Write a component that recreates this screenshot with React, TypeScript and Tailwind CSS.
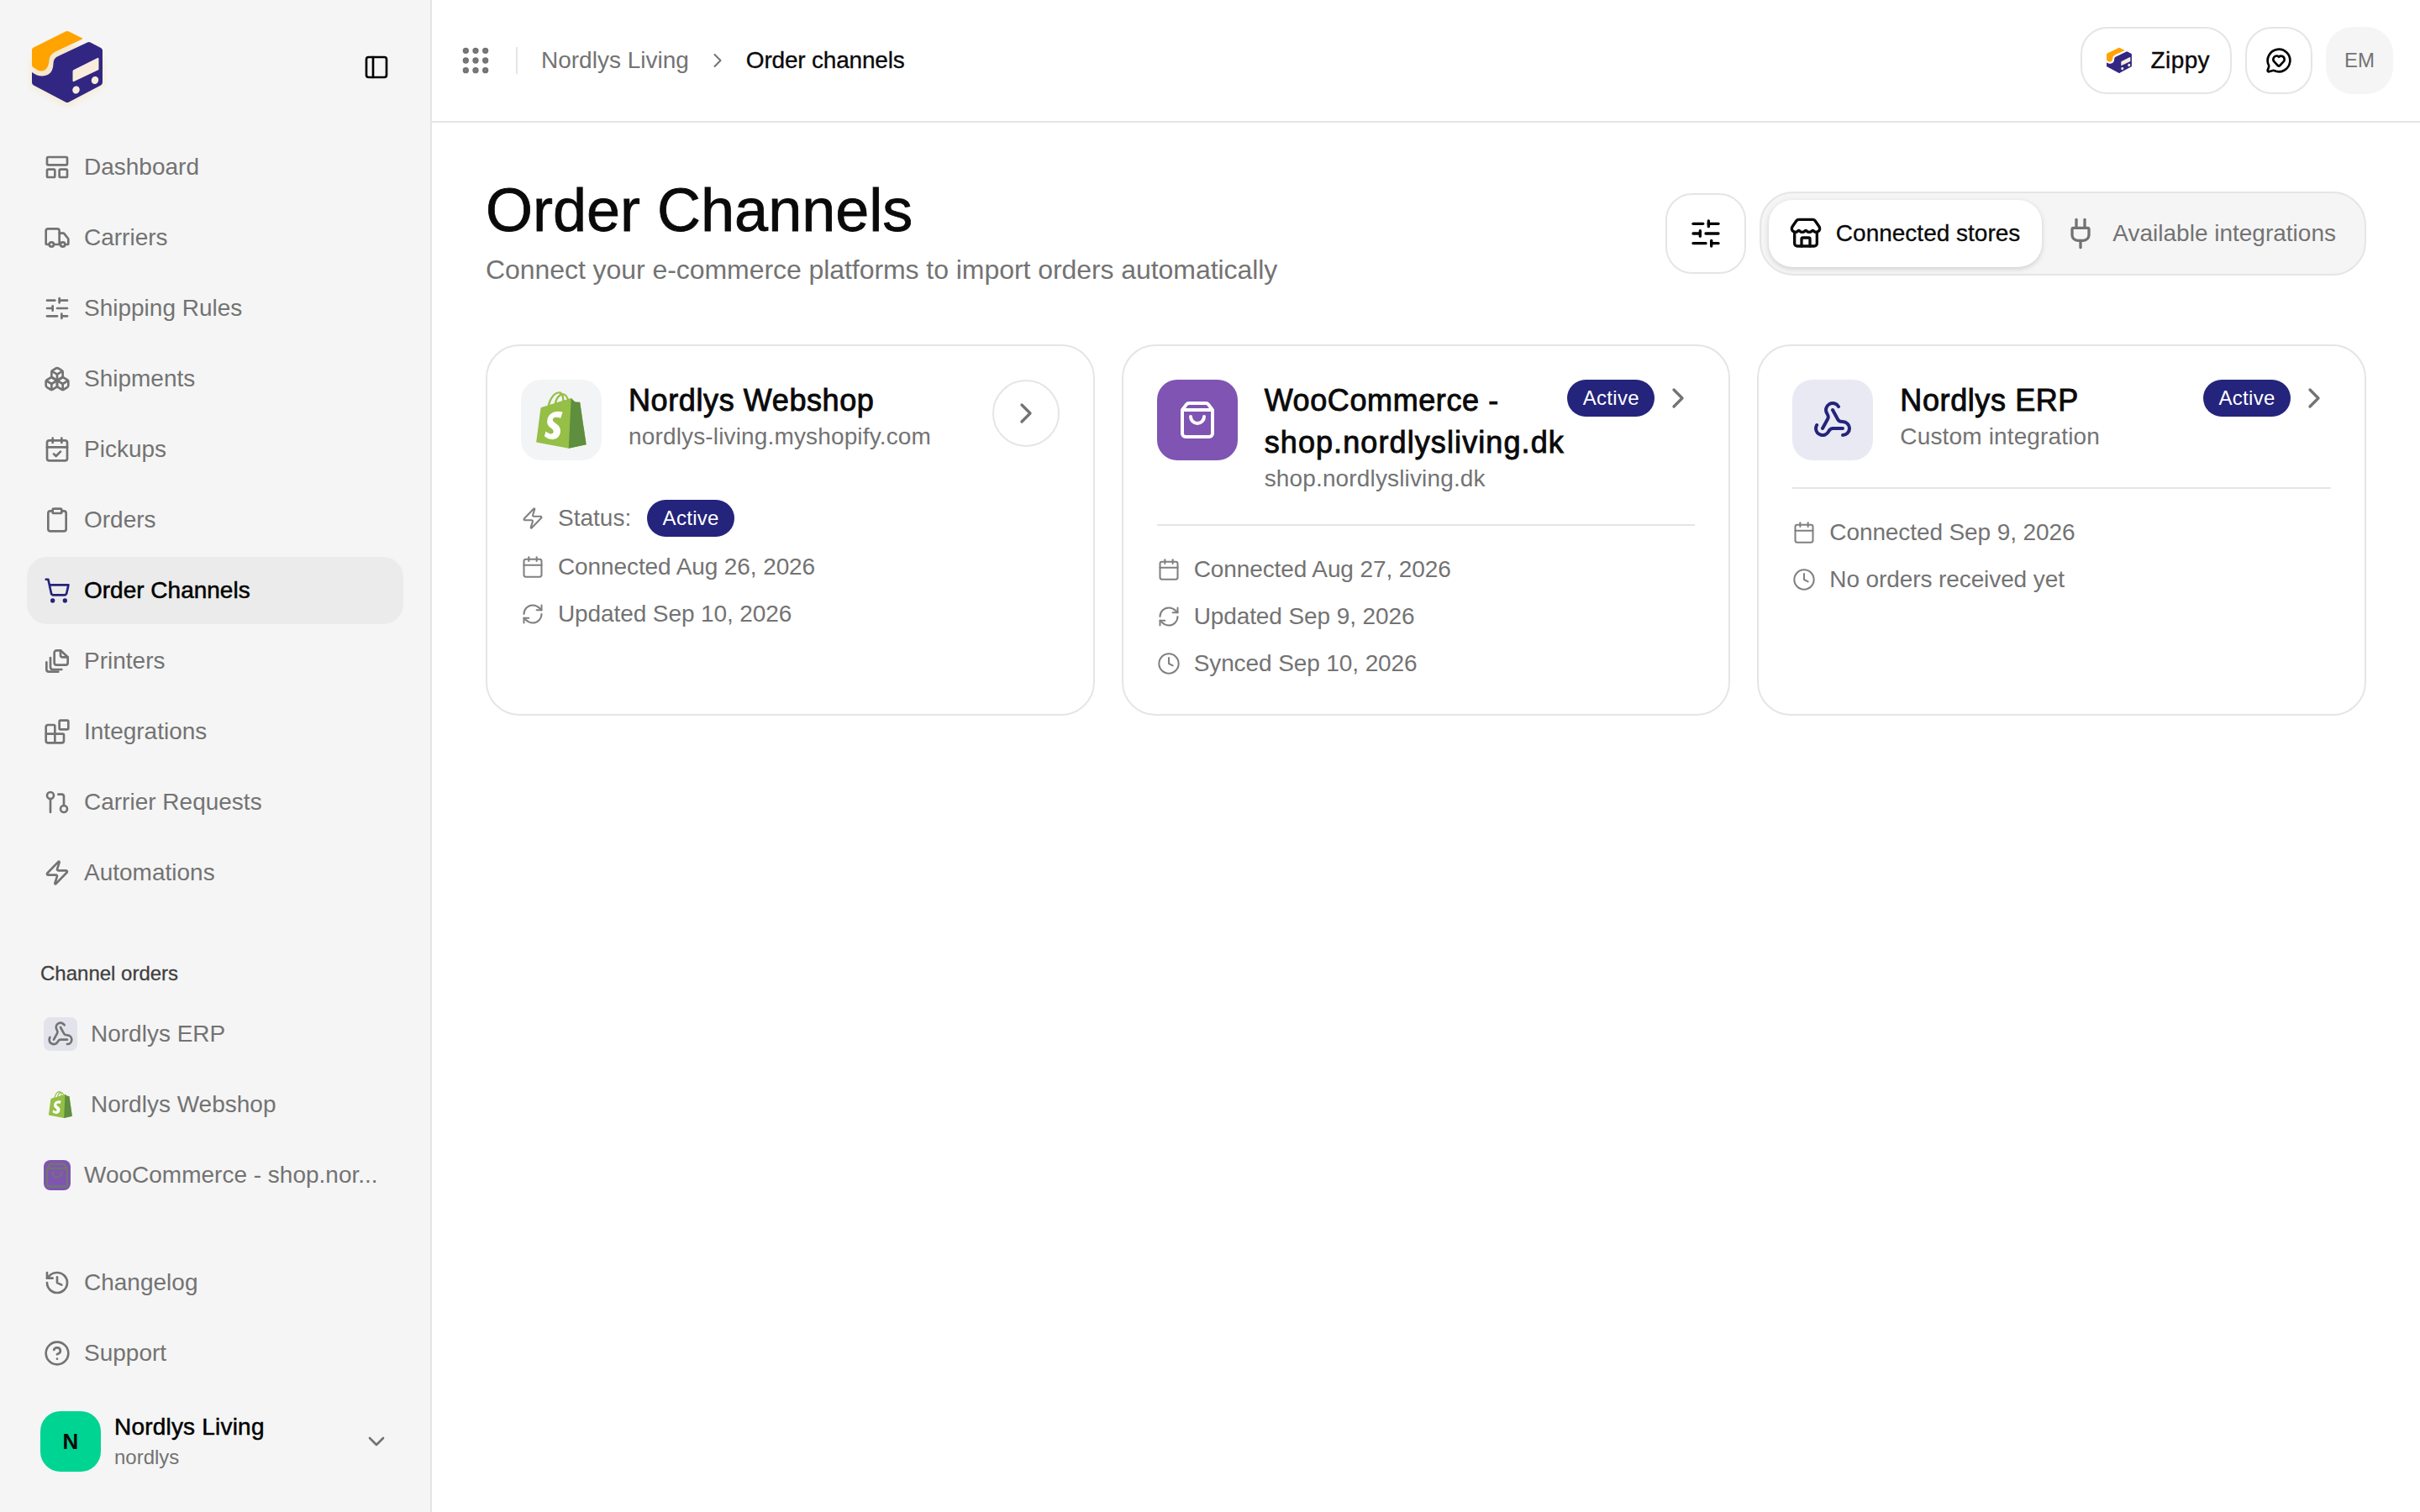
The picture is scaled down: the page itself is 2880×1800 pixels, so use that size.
import type { ReactNode } from "react";
import {
  Blocks,
  Boxes,
  Calendar,
  CalendarCheck,
  ChevronDown,
  ChevronRight,
  CircleHelp,
  Clipboard,
  Clock,
  Grip,
  History,
  LayoutPanelTop,
  MessageCircleHeart,
  PanelLeft,
  Plug,
  RefreshCw,
  ShoppingBag,
  ShoppingCart,
  SlidersHorizontal,
  Store,
  Truck,
  Webhook,
  Zap,
} from "lucide-react";

function ZippyLogo({ className, glow = false }: { className: string; glow?: boolean }) {
  return (
    <svg viewBox={glow ? "32 32 96 96" : "36 35 88 90"} className={className}>
      <defs>
        <filter id="logo-glow" x="-30%" y="-30%" width="160%" height="160%">
          <feGaussianBlur stdDeviation="5" />
        </filter>
      </defs>
      {glow && <path d="M38 70 L80 50 L122 70 V102 L80 126 L38 102 Z" fill="#ffa300" opacity="0.16" filter="url(#logo-glow)" />}
      <path
        d="M78 37.5 a5 5 0 0 1 4 0 L97 45 a1 1 0 0 1 0 2 L68 60.5 C61 64 59 67 58.5 72 C58 79 55 84 50 84.5 C47 85 44 83 40 80.5 C38.8 79.8 38 78.6 38 77 V60 C38 58 38.8 57 40 56.4 Z"
        fill="#ffa300"
      />
      <path
        d="M104 50.5 a4 4 0 0 1 3.6 0 L120 57 C121.4 57.8 122 59 122 60.5 V98 C122 99.6 121.3 100.7 120 101.4 L82 121.4 a4 4 0 0 1 -4 0 L40 101.4 C38.7 100.7 38 99.6 38 98 V86 C43 89.5 47 91 51 90.5 C59 90 63 85 63.5 76 C63.8 71 65 69 69 67 Z"
        fill="#312783"
      />
      <path d="M88 83 L116 69 a1 1 0 0 1 1.5 1 V83 L88 97 a1 1 0 0 1 -1.5 -1 V85 a2 2 0 0 1 1.5 -2 Z" fill="#f8ecdc" />
      <ellipse cx="90.5" cy="107" rx="4.2" ry="4.6" transform="rotate(25 90.5 107)" fill="#f8ecdc" />
      <ellipse cx="113" cy="95.5" rx="4.2" ry="4.6" transform="rotate(25 113 95.5)" fill="#f8ecdc" />
    </svg>
  );
}

function ShopifyBag({ className }: { className: string }) {
  return (
    <svg viewBox="0 0 256 292" className={className}>
      <path
        d="M223.774 57.34c-.201-1.46-1.48-2.268-2.537-2.357-1.055-.088-23.383-1.743-23.383-1.743s-15.507-15.395-17.209-17.099c-1.703-1.703-5.029-1.185-6.32-.805-.19.056-3.388 1.043-8.678 2.68-5.18-14.906-14.322-28.604-30.405-28.604-.444 0-.901.018-1.358.044C129.31 3.407 123.644.779 118.75.779c-37.465 0-55.364 46.835-60.976 70.635-14.558 4.511-24.9 7.718-26.221 8.133-8.126 2.549-8.383 2.805-9.45 10.462C21.3 95.806.038 260.235.038 260.235l165.678 31.042 89.77-19.42S223.973 58.8 223.775 57.34zM156.49 40.848l-14.019 4.339c.005-.988.01-1.96.01-3.023 0-9.264-1.286-16.723-3.349-22.636 8.287 1.04 13.806 10.469 17.358 21.32zm-27.638-19.483c2.304 5.773 3.802 14.058 3.802 25.238 0 .572-.005 1.095-.01 1.624-9.117 2.824-19.024 5.89-28.953 8.966 5.575-21.516 16.025-31.908 25.161-35.828zm-11.131-10.537c1.617 0 3.246.549 4.805 1.622-12.007 5.65-24.877 19.88-30.312 48.297l-22.886 7.088C75.694 46.16 90.81 10.828 117.72 10.828z"
        fill="#95BF46"
      />
      <path
        d="M221.237 54.983c-1.055-.088-23.383-1.743-23.383-1.743s-15.507-15.395-17.209-17.099c-.637-.634-1.496-.959-2.394-1.099l-12.527 256.233 89.762-19.418S223.972 58.8 223.774 57.34c-.201-1.46-1.48-2.268-2.537-2.357"
        fill="#5E8E3E"
      />
      <path
        d="M135.242 104.585l-11.069 32.926s-9.698-5.176-21.586-5.176c-17.428 0-18.305 10.937-18.305 13.693 0 15.038 39.2 20.8 39.2 55.024 0 26.925-17.077 44.264-40.104 44.264-27.632 0-41.762-17.197-41.762-17.197l7.398-24.444S63.54 216.8 76.32 216.8c8.35 0 11.747-6.574 11.747-11.377 0-19.06-32.16-19.91-32.16-51.228 0-26.358 18.92-51.865 57.11-51.865 14.714 0 21.986 4.215 21.986 4.215"
        fill="#FFF"
      />
    </svg>
  );
}

function PullRequestIcon({ className }: { className: string }) {
  return (
    <svg viewBox="0 0 24 24" fill="none" stroke="currentColor" strokeWidth="2" strokeLinecap="round" strokeLinejoin="round" className={className}>
      <circle cx="6" cy="6" r="3" />
      <path d="M6 9v12" />
      <circle cx="18" cy="18" r="3" />
      <path d="M18 15V7a2 2 0 0 0-2-2h-3" />
    </svg>
  );
}

function PrinterDocsIcon({ className }: { className: string }) {
  return (
    <svg viewBox="0 0 24 24" fill="none" stroke="currentColor" strokeWidth="2" strokeLinecap="round" strokeLinejoin="round" className={className}>
      <path d="M15 2.5h-3.5a2 2 0 0 0-2 2v9a2 2 0 0 0 2 2h8a2 2 0 0 0 2-2V8.5z" />
      <path d="M15 2.5v4a2 2 0 0 0 2 2h4.5" />
      <path d="M6 9v8.5a2 2 0 0 0 2 2h8" />
      <path d="M2.5 13v6.5a2 2 0 0 0 2 2h8.5" />
    </svg>
  );
}

const navItems = [
  { label: "Dashboard", icon: LayoutPanelTop },
  { label: "Carriers", icon: Truck },
  { label: "Shipping Rules", icon: SlidersHorizontal },
  { label: "Shipments", icon: Boxes },
  { label: "Pickups", icon: CalendarCheck },
  { label: "Orders", icon: Clipboard },
  { label: "Order Channels", icon: ShoppingCart, active: true },
  { label: "Printers", icon: PrinterDocsIcon },
  { label: "Integrations", icon: Blocks },
  { label: "Carrier Requests", icon: PullRequestIcon },
  { label: "Automations", icon: Zap },
];

function NavRow({ icon, children }: { icon: ReactNode; children: ReactNode }) {
  return <div className="flex h-20 items-center gap-4 px-5 text-[28px] text-[#737373]">{icon}{children}</div>;
}

function Sidebar() {
  return (
    <aside className="flex h-full w-[514px] shrink-0 flex-col border-r-2 border-[#e5e5e5] bg-[#f5f5f5] px-8 pt-8">
      <div className="flex h-24 items-center justify-between">
        <ZippyLogo glow className="size-24" />
        <PanelLeft className="mr-4 size-8 text-black" strokeWidth={2} />
      </div>

      <nav className="mt-[31px] flex flex-col gap-1">
        {navItems.map((item) => {
          const Icon = item.icon;
          return item.active ? (
            <div key={item.label} className="flex h-20 items-center gap-4 rounded-[24px] bg-[#ebebeb] px-5 text-[28px] text-black [-webkit-text-stroke:0.5px]">
              <Icon className="size-8 text-[#24247c]" strokeWidth={2} />
              {item.label}
            </div>
          ) : (
            <NavRow key={item.label} icon={<Icon className="size-8" strokeWidth={2} />}>
              {item.label}
            </NavRow>
          );
        })}
      </nav>

      <div className="mt-[64px] px-4 text-[24px] leading-8 text-[#404040] [-webkit-text-stroke:0.3px]">Channel orders</div>
      <div className="mt-4 flex flex-col gap-1">
        <NavRow
          icon={
            <span className="flex h-10 w-10 shrink-0 items-center justify-center rounded-lg bg-[#e3e3ec]">
              <Webhook className="size-8" strokeWidth={2} />
            </span>
          }
        >
          Nordlys ERP
        </NavRow>
        <NavRow
          icon={
            <span className="flex h-10 w-10 shrink-0 items-center justify-center">
              <ShopifyBag className="h-8 w-8" />
            </span>
          }
        >
          Nordlys Webshop
        </NavRow>
        <NavRow
          icon={
            <span className="flex h-9 w-8 shrink-0 items-center justify-center rounded-lg bg-[#7f54b3]">
              <ShoppingBag className="size-8" strokeWidth={2} />
            </span>
          }
        >
          <span className="whitespace-nowrap">WooCommerce - shop.nor...</span>
        </NavRow>
      </div>

      <div className="mt-[48px] flex flex-col gap-1">
        <NavRow icon={<History className="size-8" strokeWidth={2} />}>Changelog</NavRow>
        <NavRow icon={<CircleHelp className="size-8" strokeWidth={2} />}>Support</NavRow>
      </div>

      <div className="mt-[29px] flex items-center pl-4 pr-4">
        <div className="flex size-[72px] items-center justify-center rounded-[24px] bg-[#00d492] text-[26px] font-bold text-[#0a0a0a]">N</div>
        <div className="ml-4 flex-1">
          <div className="text-[28px] leading-9 tracking-[0.2px] text-black [-webkit-text-stroke:0.5px]">Nordlys Living</div>
          <div className="mt-[2px] text-[24px] leading-8 text-[#737373]">nordlys</div>
        </div>
        <ChevronDown className="size-8 text-[#737373]" strokeWidth={2} />
      </div>
    </aside>
  );
}

function Header() {
  return (
    <header className="flex h-[146px] shrink-0 items-center border-b-2 border-[#e5e5e5] pl-8 pr-8">
      <Grip className="size-10 text-[#737373]" strokeWidth={2.4} />
      <div className="ml-7 h-8 w-0.5 bg-[#e5e5e5]" />
      <span className="ml-7 text-[28px] text-[#737373]">Nordlys Living</span>
      <ChevronRight className="mx-5 size-7 text-[#737373]" strokeWidth={1.75} />
      <span className="text-[28px] tracking-[-0.2px] text-[#0a0a0a] [-webkit-text-stroke:0.3px]">Order channels</span>
      <div className="ml-auto flex items-center gap-4">
        <div className="flex h-20 items-center gap-[22px] rounded-[32px] border-2 border-[#e5e5e5] pl-7 pr-6 text-[28px] tracking-[0.4px] text-[#0a0a0a] [-webkit-text-stroke:0.4px]">
          <ZippyLogo className="size-8" />
          Zippy
        </div>
        <div className="flex size-20 items-center justify-center rounded-[32px] border-2 border-[#e5e5e5]">
          <MessageCircleHeart className="size-8 text-black" strokeWidth={2} />
        </div>
        <div className="flex size-20 items-center justify-center rounded-[32px] bg-[#f5f5f5] text-[24px] text-[#737373]">EM</div>
      </div>
    </header>
  );
}

function Badge() {
  return <span className="flex h-11 w-[104px] shrink-0 items-center justify-center rounded-full bg-[#24247c] text-[24px] tracking-[0.3px] text-white">Active</span>;
}

function Detail({ icon, children }: { icon: ReactNode; children: ReactNode }) {
  return (
    <div className="flex items-center gap-4 text-[28px] leading-10 tracking-[-0.1px] text-[#737373]">
      {icon}
      {children}
    </div>
  );
}

const detailIcon = "size-7 shrink-0 text-[#808080]";
const cardTitle = "text-[36px] leading-[50px] tracking-[0.6px] text-[#0a0a0a] [-webkit-text-stroke:0.9px]";
const cardSub = "text-[28px] leading-9 tracking-[0.15px] text-[#737373]";

function CardActions() {
  return (
    <div className="ml-auto flex shrink-0 items-center gap-2">
      <Badge />
      <span className="flex w-10 justify-center">
        <ChevronRight className="size-10 text-[#737373]" strokeWidth={2} />
      </span>
    </div>
  );
}

const cardClass = "h-[442px] rounded-[40px] border-2 border-[#e5e5e5] bg-white p-10";

function Cards() {
  return (
    <div className="mt-[69px] grid grid-cols-3 gap-8">
      <div className={cardClass}>
        <div className="flex items-start">
          <span className="flex size-24 shrink-0 items-center justify-center rounded-[24px] bg-[#f3f4f6]">
            <ShopifyBag className="h-[68px] w-[60px]" />
          </span>
          <div className="ml-8">
            <div className={cardTitle}>Nordlys Webshop</div>
            <div className={cardSub}>nordlys-living.myshopify.com</div>
          </div>
          <span className="ml-auto flex size-20 shrink-0 items-center justify-center rounded-full border-2 border-[#e5e5e5]">
            <ChevronRight className="size-10 text-[#737373]" strokeWidth={2} />
          </span>
        </div>
        <div className="mt-[47px] flex flex-col gap-4">
          <div className="flex h-11 items-center gap-4 text-[28px] text-[#737373]">
            <Zap className={detailIcon} strokeWidth={1.75} />
            <span className="mr-[3px]">Status:</span>
            <Badge />
          </div>
          <Detail icon={<Calendar className={detailIcon} strokeWidth={1.75} />}>Connected Aug 26, 2026</Detail>
          <Detail icon={<RefreshCw className={detailIcon} strokeWidth={1.75} />}>Updated Sep 10, 2026</Detail>
        </div>
      </div>

      <div className={cardClass}>
        <div className="flex items-start border-b-2 border-[#e5e5e5] pb-9">
          <span className="flex size-24 shrink-0 items-center justify-center rounded-[24px] bg-[#7f54b3]">
            <ShoppingBag className="size-12 text-white" strokeWidth={2} />
          </span>
          <div className="ml-8 min-w-0 flex-1">
            <div className={cardTitle}>
              WooCommerce - <span className="tracking-[1.1px]">shop.nordlysliving.dk</span>
            </div>
            <div className={cardSub}>shop.nordlysliving.dk</div>
          </div>
          <CardActions />
        </div>
        <div className="mt-8 flex flex-col gap-4">
          <Detail icon={<Calendar className={detailIcon} strokeWidth={1.75} />}>Connected Aug 27, 2026</Detail>
          <Detail icon={<RefreshCw className={detailIcon} strokeWidth={1.75} />}>Updated Sep 9, 2026</Detail>
          <Detail icon={<Clock className={detailIcon} strokeWidth={1.75} />}>Synced Sep 10, 2026</Detail>
        </div>
      </div>

      <div className={cardClass}>
        <div className="flex items-start border-b-2 border-[#e5e5e5] pb-8">
          <span className="flex size-24 shrink-0 items-center justify-center rounded-[24px] bg-[#e9e9f3]">
            <Webhook className="size-12 text-[#24247c]" strokeWidth={2} />
          </span>
          <div className="ml-8 min-w-0 flex-1">
            <div className={cardTitle}>Nordlys ERP</div>
            <div className={cardSub}>Custom integration</div>
          </div>
          <CardActions />
        </div>
        <div className="mt-8 flex flex-col gap-4">
          <Detail icon={<Calendar className={detailIcon} strokeWidth={1.75} />}>Connected Sep 9, 2026</Detail>
          <Detail icon={<Clock className={detailIcon} strokeWidth={1.75} />}>No orders received yet</Detail>
        </div>
      </div>
    </div>
  );
}

export default function App() {
  return (
    <div className="flex h-[1800px] w-[2880px] overflow-hidden bg-white font-['Liberation_Sans',sans-serif]">
      <Sidebar />
      <main className="flex min-w-0 flex-1 flex-col">
        <Header />
        <div className="px-16 pt-16">
          <div className="flex items-center justify-between">
            <div>
              <h1 className="text-[72px] leading-[80px] text-[#0a0a0a] [-webkit-text-stroke:0.8px]">Order Channels</h1>
              <p className="mt-[11px] text-[32px] leading-10 tracking-[-0.06px] text-[#737373]">Connect your e-commerce platforms to import orders automatically</p>
            </div>
            <div className="mt-1 flex items-center gap-4">
              <span className="flex size-24 items-center justify-center rounded-[32px] border-2 border-[#e5e5e5]">
                <SlidersHorizontal className="size-10 text-black" strokeWidth={2} />
              </span>
              <div className="flex h-[100px] items-center rounded-[40px] border-2 border-[#e5e5e5] bg-[#f5f5f5] pl-[9px] pr-[34px]">
                <div className="flex h-20 items-center gap-4 rounded-[28px] bg-white pl-6 pr-[26px] text-[28px] text-[#0a0a0a] shadow-[0_2px_6px_rgba(0,0,0,0.16)] [-webkit-text-stroke:0.3px]">
                  <Store className="size-10" strokeWidth={2} />
                  Connected stores
                </div>
                <div className="ml-[26px] flex items-center gap-[18px] text-[28px] text-[#737373]">
                  <Plug className="size-10" strokeWidth={2} />
                  Available integrations
                </div>
              </div>
            </div>
          </div>
          <Cards />
        </div>
      </main>
    </div>
  );
}
